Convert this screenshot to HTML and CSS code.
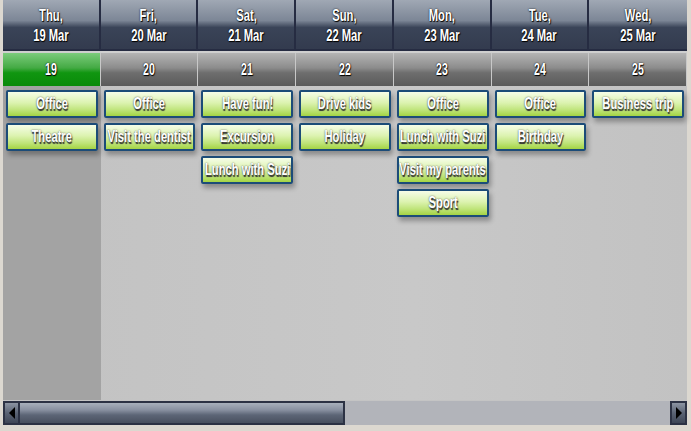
FILE: index.html
```html
<!DOCTYPE html>
<html lang="en">
<head>
  <meta charset="UTF-8" />
  <title>Scheduler</title>
  <link rel="stylesheet" href="styles.css">
</head>
<body>
  <div class="scheduler">
    <div class="day-heads">
      <div class="day-head"><span>Thu,</span><span>19 Mar</span></div>
      <div class="day-head"><span>Fri,</span><span>20 Mar</span></div>
      <div class="day-head"><span>Sat,</span><span>21 Mar</span></div>
      <div class="day-head"><span>Sun,</span><span>22 Mar</span></div>
      <div class="day-head"><span>Mon,</span><span>23 Mar</span></div>
      <div class="day-head"><span>Tue,</span><span>24 Mar</span></div>
      <div class="day-head"><span>Wed,</span><span>25 Mar</span></div>
    </div>
    <div class="dates">
      <div class="date today"><span>19</span></div>
      <div class="date"><span>20</span></div>
      <div class="date"><span>21</span></div>
      <div class="date"><span>22</span></div>
      <div class="date"><span>23</span></div>
      <div class="date"><span>24</span></div>
      <div class="date"><span>25</span></div>
    </div>
    <div class="days">
      <div class="day today">
        <div class="event"><span>Office</span></div>
        <div class="event"><span>Theatre</span></div>
      </div>
      <div class="day">
        <div class="event"><span>Office</span></div>
        <div class="event"><span>Visit the dentist</span></div>
      </div>
      <div class="day">
        <div class="event"><span>Have fun!</span></div>
        <div class="event"><span>Excursion</span></div>
        <div class="event"><span>Lunch with Suzi</span></div>
      </div>
      <div class="day">
        <div class="event"><span>Drive kids</span></div>
        <div class="event"><span>Holiday</span></div>
      </div>
      <div class="day">
        <div class="event"><span>Office</span></div>
        <div class="event"><span>Lunch with Suzi</span></div>
        <div class="event"><span>Visit my parents</span></div>
        <div class="event"><span>Sport</span></div>
      </div>
      <div class="day">
        <div class="event"><span>Office</span></div>
        <div class="event"><span>Birthday</span></div>
      </div>
      <div class="day">
        <div class="event"><span>Business trip</span></div>
      </div>
    </div>
    <div class="scrollbar">
      <div class="arrow left"><svg width="6" height="12" viewBox="0 0 6 12"><path d="M6 0 L0 6 L6 12 Z" fill="#000"/></svg></div>
      <div class="thumb"></div>
      <div class="track"></div>
      <div class="arrow right"><svg width="6" height="12" viewBox="0 0 6 12"><path d="M0 0 L6 6 L0 12 Z" fill="#000"/></svg></div>
    </div>
  </div>
</body>
</html>
```

FILE: styles.css
```css
body {
  margin: 0;
  background: #dcd8d0;
  font-family: "Liberation Sans", Arial, sans-serif;
  font-weight: bold;
  color: #fff;
}
.scheduler {
  width: 684px;
  margin-left: 3px;
  background: #c4c4c4;
}
.day-heads,
.dates,
.days {
  display: grid;
  grid-template-columns: repeat(7, 1fr);
}
.day-head span,
.date span,
.event span {
  display: inline-block;
  transform: scaleX(0.66);
  white-space: nowrap;
}
.day-head {
  height: 51px;
  box-sizing: border-box;
  padding-top: 6px;
  border-right: 2px solid #262c42;
  border-bottom: 2px solid #262c42;
  background: linear-gradient(#a0a8b4, #7c8696 42%, #3a4458 56%, #333b4e);
  display: flex;
  flex-direction: column;
  align-items: center;
  font-size: 17px;
  line-height: 20px;
  text-shadow: 1px 1px 1px #000, 0 0 2px #000;
}
.day-head:last-child { border-right: none; }
.dates {
  padding-top: 2px;
  background: #cfcfcf;
}
.date {
  height: 33px;
  line-height: 33px;
  text-align: center;
  font-size: 16px;
  border-right: 1px solid #c8c8c8;
  background: linear-gradient(#b4b4b4, #8c8c8c 45%, #6e6e6e 60%, #5a5a5a);
  text-shadow: 1px 1px 1px #000, 0 0 2px #000;
}
.date.today {
  background: linear-gradient(#7ccc7c, #44aa44 45%, #109610 60%, #0a8a0a);
}
.days {
  height: 314px;
  background: linear-gradient(90deg, #c2c2c2, #c8c8c8 60%, #c2c2c2);
}
.day {
  display: flex;
  flex-direction: column;
  gap: 5px;
  padding: 4px 3px 0 3px;
  min-width: 0;
}
.day.today {
  background: #a3a3a3;
}
.event {
  height: 24px;
  line-height: 24px;
  border: 2px solid #1c4c78;
  border-radius: 2px;
  background: linear-gradient(#f6fde8, #dcf3b0 45%, #bfe47a 75%, #a4d444);
  display: flex;
  justify-content: center;
  overflow: hidden;
  font-size: 17px;
  text-shadow: 1px 2px 1px #333, 0 0 2px #444;
  box-shadow: 2px 4px 5px rgba(0, 0, 0, 0.3);
}
.scrollbar {
  display: flex;
  height: 24px;
  margin-top: 1px;
  background: #b2b4ba;
}
.arrow {
  width: 13px;
  border: 2px solid #2c3244;
  background: linear-gradient(#8c94a2, #5a6374 50%, #3e4656);
  display: flex;
  align-items: center;
  justify-content: center;
}
.thumb {
  width: 323px;
  border: 2px solid #2c3244;
  border-left: none;
  background: linear-gradient(#a8b0bc, #8890a0 35%, #5c6576 60%, #48505f);
}
.track {
  flex: 1;
}
```
